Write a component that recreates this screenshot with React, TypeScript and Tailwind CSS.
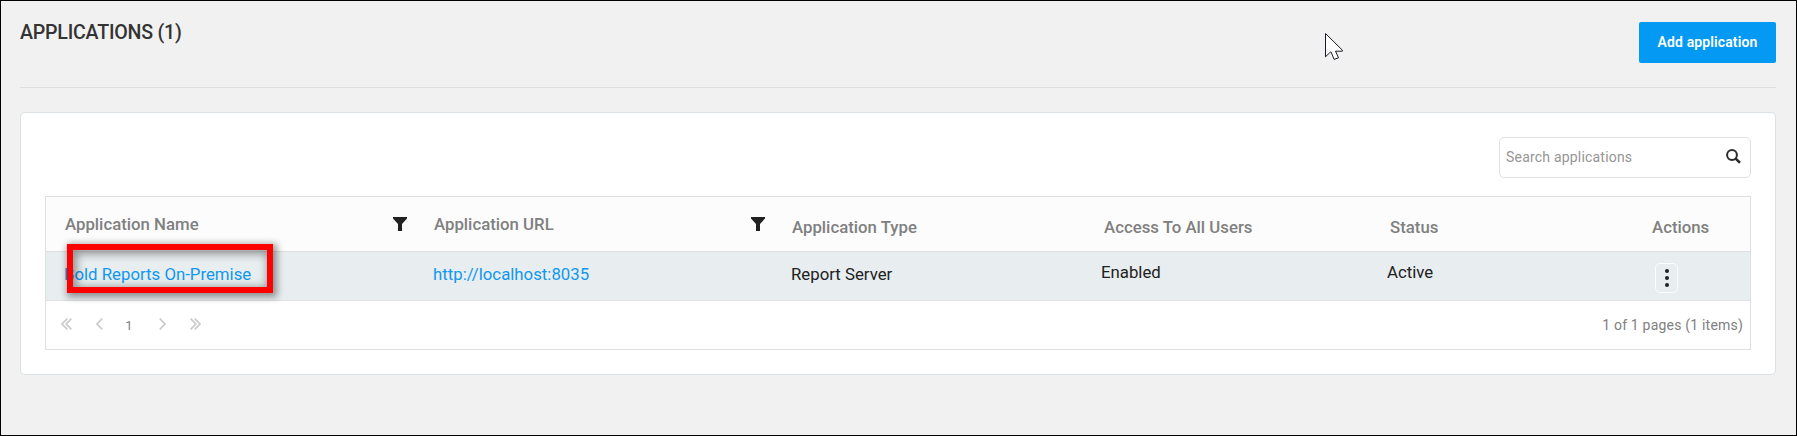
import React from "react";

const columns = "grid grid-cols-[369px_358px_312px_286px_262px_1fr]";

function FilterIcon() {
  return (
    <svg width="14" height="14" viewBox="0 0 14 14" fill="#212121">
      <path d="M0 0h14v1.6L9 7v7H5V7L0 1.6z" />
    </svg>
  );
}

function SearchIcon() {
  return (
    <svg width="15" height="15" viewBox="0 0 15 15" fill="none" stroke="#2b2b2b">
      <circle cx="6" cy="6" r="4.9" strokeWidth="2" />
      <path d="M9.4 9.4L14 13.8" strokeWidth="2.6" />
    </svg>
  );
}

function Chevron({ double, right }: { double?: boolean; right?: boolean }) {
  return (
    <svg
      width={double ? 11 : 7}
      height="12"
      viewBox={double ? "0 0 11 12" : "0 0 7 12"}
      fill="none"
      stroke="#cbcbcb"
      strokeWidth="1.7"
      className={right ? "rotate-180" : ""}
    >
      <path d="M6.2 .6L1 6l5.2 5.4" />
      {double && <path d="M10.4 .6L5.2 6l5.2 5.4" />}
    </svg>
  );
}

function Pointer() {
  return (
    <svg className="absolute left-[1323px] top-[31px]" width="20" height="29" viewBox="0 0 20 29">
      <path
        d="M1.5 1.5v23.3l5-4.8h.6l3 7.4 4.4-1.6-3-6.6h6.9v-1z"
        fill="#fff"
        stroke="#1a1a26"
        strokeWidth="1"
      />
    </svg>
  );
}

export default function App() {
  return (
    <div className="relative h-[436px] w-[1797px] overflow-hidden border border-black bg-[#f1f1f1] pl-[19px] pr-5 font-[Roboto,sans-serif] text-[#212121]">
      <header className="flex h-[87px] items-start justify-between border-b border-[#dfdfdf]">
        <h1 className="mt-[18px] text-[19.6px] leading-[28px] font-medium tracking-[-0.22px] whitespace-nowrap text-[#333]">
          APPLICATIONS (1)
        </h1>
        <button className="mt-[21px] h-[41px] w-[137px] rounded-[2px] bg-[#0499f2] text-[14px] font-semibold tracking-[0.12px] whitespace-nowrap text-white">
          Add application
        </button>
      </header>

      <main className="mt-6 h-[263px] rounded-[5px] border border-[#dbe0e4] bg-white px-6 pt-6">
        <div className="flex justify-end">
          <div className="flex h-[41px] w-[252px] items-center justify-between rounded-[5px] border border-[#dfdfdf] pr-[9px] pl-[6px]">
            <span className="text-[14px] tracking-[0.2px] text-[#959595]">Search applications</span>
            <span className="-mt-[3px]">
              <SearchIcon />
            </span>
          </div>
        </div>

        <section className="mt-[18px] border border-[#dfdfdf]">
          <div className={`${columns} h-[55px] border-b border-[#dfdfdf] bg-[#fcfcfc] text-[16.8px] leading-6 font-medium whitespace-nowrap text-[#808080]`}>
            <div className="flex justify-between pt-[15px] pr-[8px] pl-[19px]">
              Application Name
              <span className="mt-[5px]">
                <FilterIcon />
              </span>
            </div>
            <div className="flex justify-between pt-[15px] pr-[8px] pl-[19px]">
              Application URL
              <span className="mt-[5px]">
                <FilterIcon />
              </span>
            </div>
            <div className="pt-[18px] pl-[19px]">Application Type</div>
            <div className="pt-[18px] pl-[19px]">Access To All Users</div>
            <div className="pt-[18px] pl-[19px]">Status</div>
            <div className="pt-[18px] pl-[19px]">Actions</div>
          </div>

          <div className={`${columns} h-[49px] border-b border-[#dfdfdf] bg-[#e8edef] text-[16.8px] leading-6 whitespace-nowrap`}>
            <div className="pt-[10px] pl-[18px] text-[#0f98f0]">Bold Reports On-Premise</div>
            <div className="pt-[10px] pl-[18px] text-[#0f98f0]">http://localhost:8035</div>
            <div className="pt-[10px] pl-[18px]">Report Server</div>
            <div className="pt-[8px] pl-[16px]">Enabled</div>
            <div className="pt-[8px] pl-[16px]">Active</div>
            <div className="pt-[11px] pl-[22px]">
              <button className="flex h-[30px] w-[23px] flex-col items-center justify-center gap-[3px] rounded-[5px] border border-[#fcfcfc]">
                <i className="size-[4px] rounded-full bg-[#212121]" />
                <i className="size-[4px] rounded-full bg-[#212121]" />
                <i className="size-[4px] rounded-full bg-[#212121]" />
              </button>
            </div>
          </div>

          <footer className="flex h-12 items-center justify-between pr-[7px] pl-[15px] text-[#808080]">
            <div className="-mt-[3px] flex items-center text-[13px]">
              <Chevron double />
              <span className="ml-6">
                <Chevron />
              </span>
              <span className="mt-[4px] w-[56px] pr-[4px] text-center">1</span>
              <Chevron right />
              <span className="ml-6">
                <Chevron double right />
              </span>
            </div>
            <span className="mt-px text-[14px] tracking-[0.2px] whitespace-nowrap">1 of 1 pages (1 items)</span>
          </footer>
        </section>
      </main>

      <div className="absolute left-[66px] top-[243px] h-[49px] w-[206px] border-[6px] border-[#fe0000] shadow-[2px_2px_7px_2px_rgba(0,0,0,0.4),inset_2px_2px_8px_2px_rgba(0,0,0,0.38)]" />
      <Pointer />
    </div>
  );
}
